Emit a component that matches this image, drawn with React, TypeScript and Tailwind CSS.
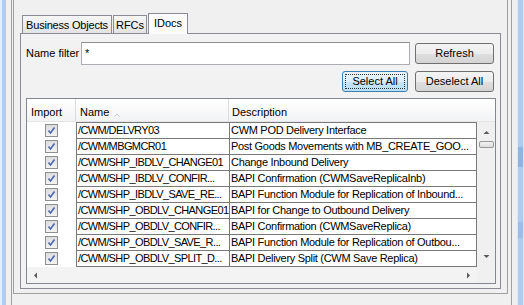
import React from "react";

const rows: [string, string][] = [
  ["/CWM/DELVRY03", "CWM POD Delivery Interface"],
  ["/CWM/MBGMCR01", "Post Goods Movements with MB_CREATE_GOO..."],
  ["/CWM/SHP_IBDLV_CHANGE01", "Change Inbound Delivery"],
  ["/CWM/SHP_IBDLV_CONFIR...", "BAPI Confirmation (CWMSaveReplicaInb)"],
  ["/CWM/SHP_IBDLV_SAVE_RE...", "BAPI Function Module for Replication of Inbound..."],
  ["/CWM/SHP_OBDLV_CHANGE01", "BAPI for Change to Outbound Delivery"],
  ["/CWM/SHP_OBDLV_CONFIR...", "BAPI Confirmation (CWMSaveReplica)"],
  ["/CWM/SHP_OBDLV_SAVE_R...", "BAPI Function Module for Replication of Outbou..."],
  ["/CWM/SHP_OBDLV_SPLIT_D...", "BAPI Delivery Split (CWM Save Replica)"],
];

function CheckBox() {
  return (
    <div className="w-[13px] h-[13px] border border-[#8e8f8f] bg-[linear-gradient(to_bottom,#dcdcdc,#f4f4f4)] flex items-center justify-center">
      <svg width="11" height="11" viewBox="0 0 11 11">
        <path d="M2.5 5.5 L4.5 8 L8.5 2.5" fill="none" stroke="#4a64b0" strokeWidth="1.5" />
      </svg>
    </div>
  );
}

function Arrow({ dir }: { dir: "up" | "down" | "left" | "right" }) {
  const pts: Record<string, string> = {
    up: "0.5,4 3.5,1 6.5,4",
    down: "0.5,1 3.5,4 6.5,1",
    left: "4,0.5 1,3.5 4,6.5",
    right: "1,0.5 4,3.5 1,6.5",
  };
  const vert = dir === "up" || dir === "down";
  return (
    <svg width={vert ? 7 : 5} height={vert ? 5 : 7} viewBox={vert ? "0 0 7 5" : "0 0 5 7"}>
      <polygon points={pts[dir]} fill="#5a5a5a" />
    </svg>
  );
}

function Button({ label, width, focused }: { label: string; width: string; focused?: boolean }) {
  if (focused) {
    return (
      <div
        className={`${width} relative h-[21px] rounded-[3px] border border-[#3c7fb1] bg-[linear-gradient(to_bottom,#eaf5fc_0%,#dbeefa_50%,#c8e5f7_51%,#b9def5_100%)] flex items-center justify-center text-[11px] text-black`}
      >
        <span className="absolute inset-[2px] border border-dotted border-[#333]" />
        {label}
      </div>
    );
  }
  return (
    <div
      className={`${width} h-[21px] rounded-[3px] border border-[#707070] bg-[linear-gradient(to_bottom,#f4f4f4_0%,#ececec_50%,#dfdfdf_51%,#d4d4d4_100%)] flex items-center justify-center text-[11px] text-black`}
    >
      {label}
    </div>
  );
}

export default function App() {
  return (
    <div className="w-[524px] h-[305px] bg-[#f0f0f0] flex overflow-hidden font-['Liberation_Sans',Arial,sans-serif] text-[11px] leading-[13px] text-black">
      {/* left window edge */}
      <div className="w-[2px] bg-[#e4edf8]" />
      <div className="w-[4px] bg-[#b0cdef]" />
      <div className="w-[5px]" />
      <div className="w-[1px] bg-[#a0a0a0]" />
      <div className="w-[1px]" />

      {/* frame */}
      <div className="w-[495px] h-[294px] border-l border-r border-b border-[#a0a0a0] pl-[6px] pr-[6px] pt-[13px] pb-[4px] flex flex-col">
        {/* tabs */}
        <div className="flex items-end h-[20px]">
          <div className="ml-[2px] w-[90px] h-[18px] border-l border-t border-r border-[#898c95] bg-[linear-gradient(to_bottom,#f7f7f7,#e3e3e3)] flex items-center justify-center pt-[1px] tracking-[-0.2px]">
            Business Objects
          </div>
          <div className="ml-[1px] w-[34px] h-[18px] border-l border-t border-r border-[#898c95] bg-[linear-gradient(to_bottom,#f7f7f7,#e3e3e3)] flex items-center justify-center pt-[1px]">
            RFCs
          </div>
          <div className="ml-[1px] w-[40px] h-[21px] -mb-[1px] relative z-10 border-l border-t border-r border-[#898c95] bg-[#fbfbfb] flex items-center justify-center pb-[2px]">
            IDocs
          </div>
        </div>

        {/* tab panel */}
        <div className="flex-1 border border-[#898c95] bg-[#f2f2f2] flex flex-col pt-[8px] pl-[5px] pr-[6px]">
          {/* filter row */}
          <div className="flex items-center h-[23px]">
            <div className="w-[55px]">Name filter</div>
            <div className="w-[329px] h-[23px] border border-[#abadb3] border-t-[#8e8f8f] bg-white flex items-center pl-[3px]">
              *
            </div>
            <div className="ml-[5px]">
              <Button label="Refresh" width="w-[79px]" />
            </div>
          </div>

          {/* select buttons */}
          <div className="flex justify-end mt-[6px] gap-[7px]">
            <Button label="Select All" width="w-[66px]" focused />
            <Button label="Deselect All" width="w-[79px]" />
          </div>

          {/* table */}
          <div className="mt-[6px] w-[470px] h-[186px] border border-[#828790] bg-white flex flex-col">
            {/* header */}
            <div className="h-[23px] flex bg-[linear-gradient(to_bottom,#ffffff,#f2f3f5)] border-b border-[#e5e5e5]">
              <div className="w-[49px] border-r border-[#dcdcdc] pl-[4px] pt-[7px]">Import</div>
              <div className="w-[153px] border-r border-[#dcdcdc] pl-[4px] pt-[7px] flex">
                <span>Name</span>
                <svg width="6" height="6" viewBox="0 0 6 6" className="ml-[5px] mt-[6px]">
                  <path d="M0.5 4.5 L3 2 L5.5 4.5" fill="none" stroke="#c8c8c8" strokeWidth="1" />
                </svg>
              </div>
              <div className="flex-1 pl-[3px] pt-[7px]">Description</div>
            </div>

            {/* body */}
            <div className="flex h-[145px]">
              <div className="w-[450px] flex flex-col bg-white">
                {rows.map(([name, desc], i) => (
                  <div key={i} className="h-[16px] flex">
                    <div className="w-[49px] flex items-center justify-center">
                      <CheckBox />
                    </div>
                    <div className="w-[153px] border-l border-t border-[#7a7a7a] pl-[1px] whitespace-nowrap overflow-hidden flex items-center tracking-[-0.6px]">
                      {name}
                    </div>
                    <div className="w-[248px] border-l border-r border-t border-[#7a7a7a] pl-[1px] whitespace-nowrap overflow-hidden flex items-center tracking-[-0.3px]">
                      {desc}
                    </div>
                  </div>
                ))}
                <div className="h-[1px] flex">
                  <div className="w-[49px]" />
                  <div className="w-[401px] bg-[#7a7a7a]" />
                </div>
              </div>
              {/* vertical scrollbar */}
              <div className="w-[18px] bg-[#f0f0f0] flex flex-col items-center">
                <div className="h-[17px] flex items-center justify-center pt-[3px]">
                  <Arrow dir="up" />
                </div>
                <div className="mt-[2px] w-[15px] h-[7px] rounded-[2px] border border-[#979797] bg-[linear-gradient(to_bottom,#f3f3f3,#dcdcdc)]" />
                <div className="flex-1" />
                <div className="h-[17px] flex items-center justify-center pb-[4px]">
                  <Arrow dir="down" />
                </div>
              </div>
            </div>

            {/* horizontal scrollbar */}
            <div className="flex-1 flex">
              <div className="w-[450px] bg-[#f3f3f3] flex items-center justify-between px-[6px]">
                <Arrow dir="left" />
                <Arrow dir="right" />
              </div>
              <div className="flex-1 bg-[#f0f0f0]" />
            </div>
          </div>
        </div>
      </div>

      <div className="w-[3px]" />
      <div className="w-[1px] bg-[#a0a0a0]" />
      <div className="w-[5px]" />
      {/* right window edge */}
      <div className="w-[1px] bg-[#dbe7f6]" />
      <div className="w-[5px] flex flex-col bg-[#afcbee]">
        <div className="h-[147px]" />
        <div className="h-[20px] bg-[#8fb3e3]" />
        <div className="h-[55px]" />
        <div className="h-[16px] bg-[#9dbde8]" />
      </div>
      <div className="w-[1px] bg-[#d8e5f6]" />
    </div>
  );
}
